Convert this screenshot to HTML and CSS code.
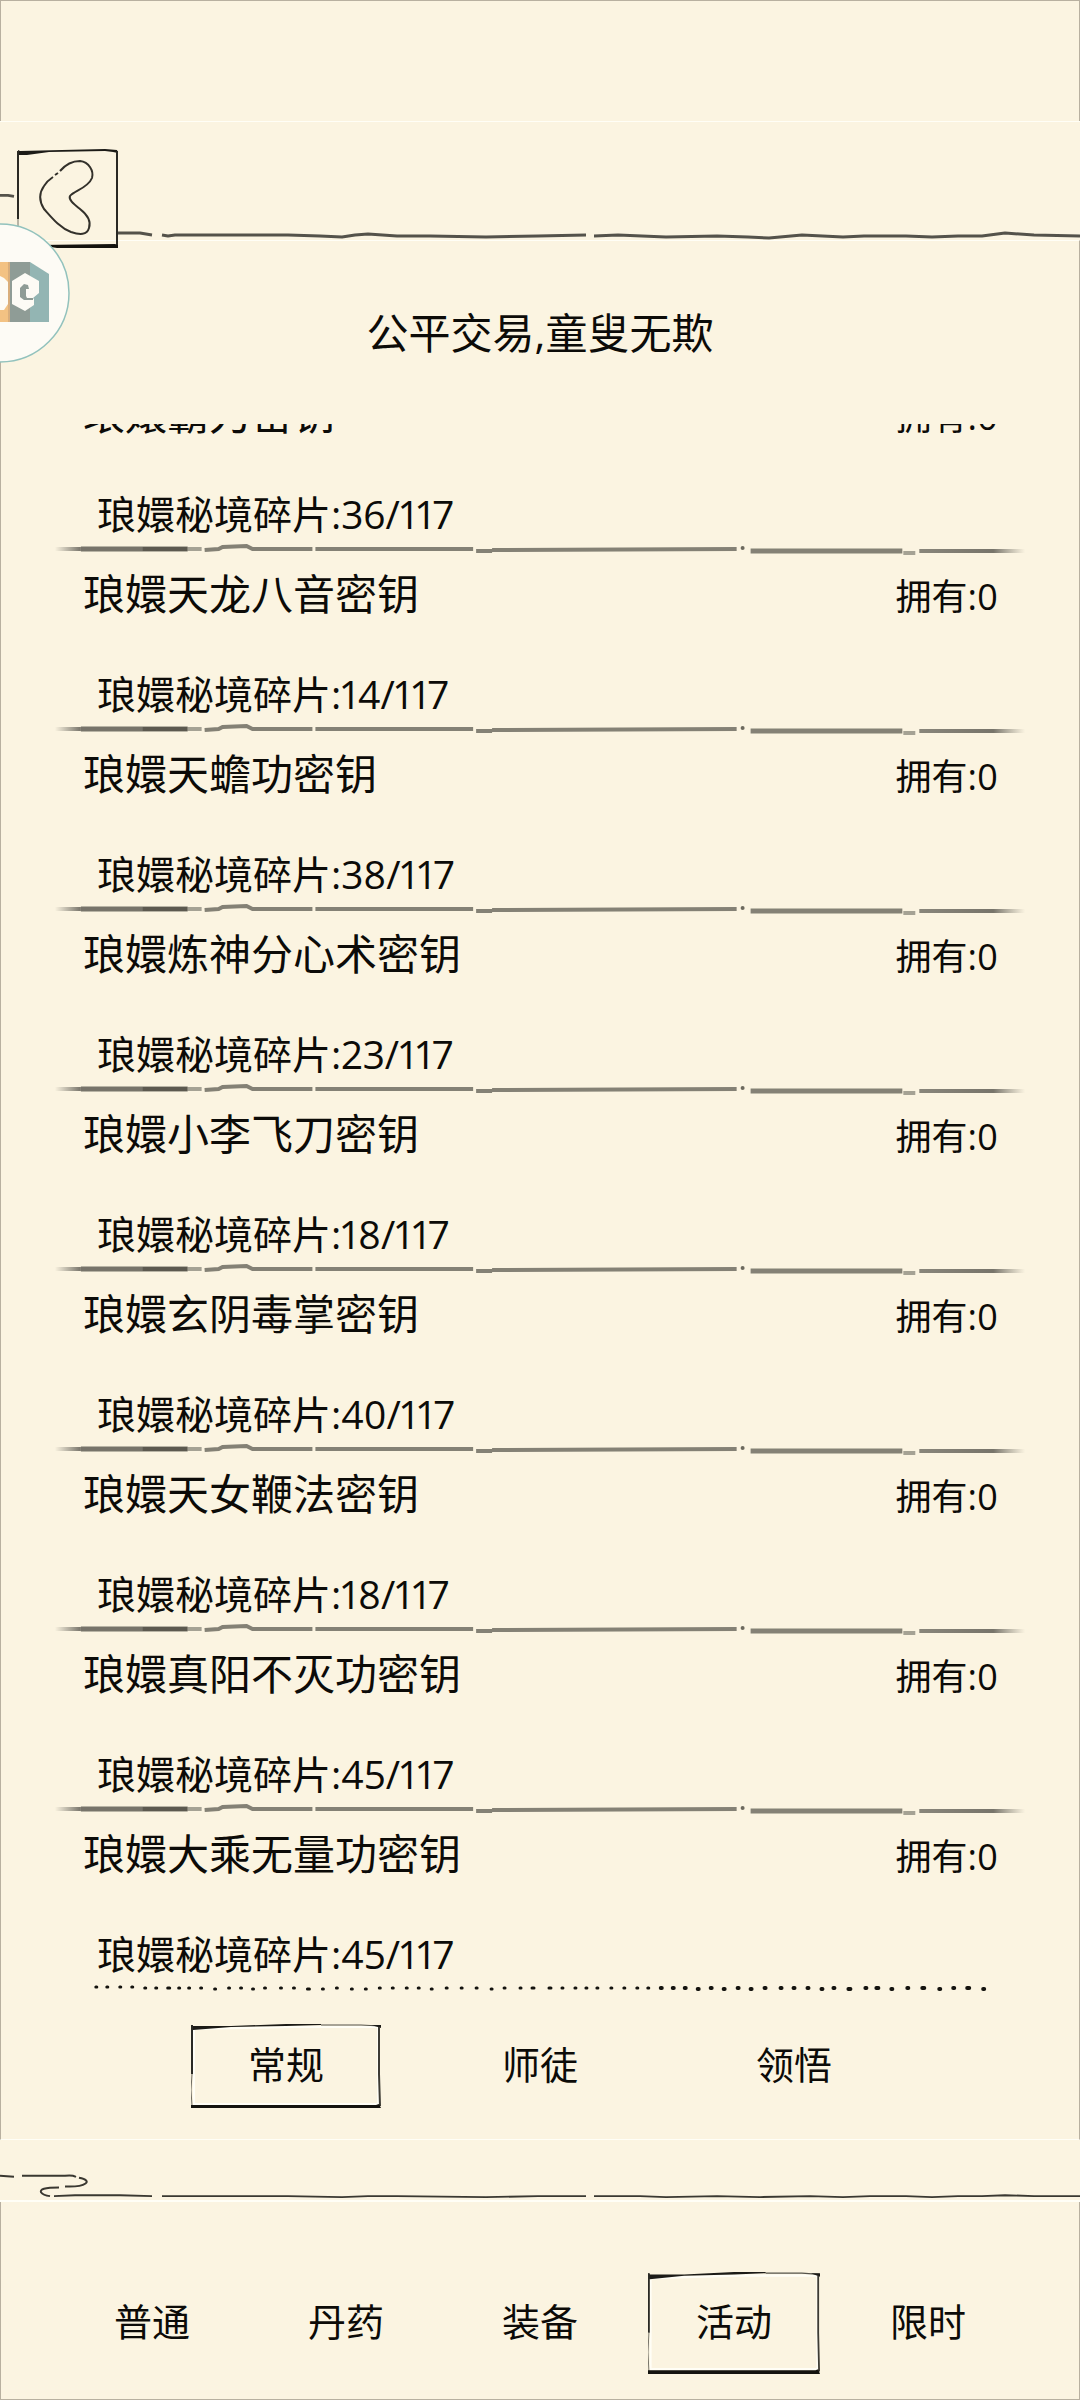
FILE: index.html
```
<!DOCTYPE html>
<html lang="zh-CN">
<head>
    <meta charset="UTF-8">
    <meta name="viewport" content="width=device-width, initial-scale=1.0">
    <title>公平交易</title>
    <link rel="stylesheet" href="styles.css">
</head>
<body>
    <!-- Shared ink strokes -->
    <svg class="defs" aria-hidden="true">
        <defs>
            <linearGradient id="fadeIn">
                <stop offset="0" stop-color="#77746a" stop-opacity="0"/>
                <stop offset="1" stop-color="#77746a"/>
            </linearGradient>
            <linearGradient id="fadeOut">
                <stop offset="0" stop-color="#88857a"/>
                <stop offset="0.7" stop-color="#77746a"/>
                <stop offset="1" stop-color="#88857a" stop-opacity="0"/>
            </linearGradient>
            <symbol id="frame" viewBox="0 0 190 84" preserveAspectRatio="none">
                <path d="M3 5L100 3L187 3V80H3Z" fill="none" stroke="#fffef6" stroke-width="2"/>
                <path d="M0 1L2 2L40 2L95 0L130 0L130 1L95 2L40 3L2 6L0 5Z" fill="#1c1b17"/>
                <path d="M130 1L170 1L189 2" fill="none" stroke="#55534a" stroke-width="1"/>
                <path d="M180 1L190 1L190 4L187 3Z" fill="#1c1b17"/>
                <path d="M1 1V50" fill="none" stroke="#2a2924" stroke-width="2"/>
                <path d="M1 50L0 66L1 82" fill="none" stroke="#6e6b60" stroke-width="1"/>
                <path d="M188 3L188 50L189 82" fill="none" stroke="#3d3b34" stroke-width="2"/>
                <path d="M0 81H185L188 80L190 84H0Z" fill="#14130f"/>
            </symbol>
            <symbol id="rule" viewBox="0 0 1080 18" preserveAspectRatio="none">
                <rect x="54" y="7" width="26" height="4" fill="url(#fadeIn)"/>
                <path d="M80 9H187" stroke="#77746a" stroke-width="5"/>
                <path d="M142 9H187" stroke="#5c594f" stroke-width="4"/>
                <path d="M187 9H201" stroke="#a5a294" stroke-width="4"/>
                <path d="M204 10L218 9L222 7L246 6L252 9L312 9M315 9L473 9M476 11H492M492 10L737 9" fill="none" stroke="#848175" stroke-width="4"/>
                <circle cx="743" cy="8" r="2" fill="#6c695e"/>
                <path d="M751 11H903" stroke="#848175" stroke-width="5"/>
                <path d="M904 13H916" stroke="#a5a294" stroke-width="4"/>
                <rect x="920" y="9" width="106" height="4" fill="url(#fadeOut)"/>
            </symbol>
        </defs>
    </svg>

    <div class="status-area"></div>

    <header class="top-bar">
        <svg class="band-line" viewBox="0 0 1080 119" preserveAspectRatio="none" aria-hidden="true">
            <g fill="none" stroke="#54524a" stroke-width="3" stroke-linejoin="round">
                <path d="M0 74L8 74L14 75"/>
                <path d="M117 112L140 112L152 114M162 114L168 115L175 114L288 114L320 115L342 116L355 114L368 113L397 115L430 115L486 116L538 115L586 114M594 115L618 114L666 116L717 115L748 116L769 117L802 114L843 116L864 115L906 115L932 116L958 115L982 115L1005 112L1034 114L1080 115"/>
            </g>
        </svg>
        <button class="back" aria-label="返回">
            <svg viewBox="0 0 102 100" aria-hidden="true">
                <path d="M1 1L3 2L45 1L88 0L100 1L101 4L96 3L88 2L32 3L10 6L1 6Z" fill="#1c1b17"/>
                <path d="M1 2V70" stroke="#2a2924" stroke-width="2"/>
                <path d="M1 70V97H35" fill="none" stroke="#77746a" stroke-width="1"/>
                <path d="M100 2V98" stroke="#2a2924" stroke-width="2"/>
                <path d="M22 96L98 95L101 96V99H40Z" fill="#14130f"/>
                <path d="M43 22C49 15 56 12 63 12C72 13 77 22 75 29C71 39 57 42 53 47C51 51 58 56 63 60C72 67 74 73 72 79C70 86 63 86 54 83C43 79 35 69 27 60C22 52 22 44 27 37C30 32 33 30 36 28M38 26L41 24" fill="none" stroke="#33312b" stroke-width="2"/>
            </svg>
        </button>
    </header>

    <main class="shop">
        <h1 class="title">公平交易,童叟无欺</h1>

        <ul class="list">
            <li class="item">
                <svg class="rule"><use href="#rule"/></svg>
                <div class="head"><span class="name">琅嬛霸刀密钥</span><span class="owned">拥有:0</span></div>
                <div class="cost">琅嬛秘境碎片:36/117</div>
            </li>
            <li class="item">
                <svg class="rule"><use href="#rule"/></svg>
                <div class="head"><span class="name">琅嬛天龙八音密钥</span><span class="owned">拥有:0</span></div>
                <div class="cost">琅嬛秘境碎片:14/117</div>
            </li>
            <li class="item">
                <svg class="rule"><use href="#rule"/></svg>
                <div class="head"><span class="name">琅嬛天蟾功密钥</span><span class="owned">拥有:0</span></div>
                <div class="cost">琅嬛秘境碎片:38/117</div>
            </li>
            <li class="item">
                <svg class="rule"><use href="#rule"/></svg>
                <div class="head"><span class="name">琅嬛炼神分心术密钥</span><span class="owned">拥有:0</span></div>
                <div class="cost">琅嬛秘境碎片:23/117</div>
            </li>
            <li class="item">
                <svg class="rule"><use href="#rule"/></svg>
                <div class="head"><span class="name">琅嬛小李飞刀密钥</span><span class="owned">拥有:0</span></div>
                <div class="cost">琅嬛秘境碎片:18/117</div>
            </li>
            <li class="item">
                <svg class="rule"><use href="#rule"/></svg>
                <div class="head"><span class="name">琅嬛玄阴毒掌密钥</span><span class="owned">拥有:0</span></div>
                <div class="cost">琅嬛秘境碎片:40/117</div>
            </li>
            <li class="item">
                <svg class="rule"><use href="#rule"/></svg>
                <div class="head"><span class="name">琅嬛天女鞭法密钥</span><span class="owned">拥有:0</span></div>
                <div class="cost">琅嬛秘境碎片:18/117</div>
            </li>
            <li class="item">
                <svg class="rule"><use href="#rule"/></svg>
                <div class="head"><span class="name">琅嬛真阳不灭功密钥</span><span class="owned">拥有:0</span></div>
                <div class="cost">琅嬛秘境碎片:45/117</div>
            </li>
            <li class="item">
                <svg class="rule"><use href="#rule"/></svg>
                <div class="head"><span class="name">琅嬛大乘无量功密钥</span><span class="owned">拥有:0</span></div>
                <div class="cost">琅嬛秘境碎片:45/117</div>
            </li>
        </ul>

        <svg class="dots" viewBox="0 0 1080 20" preserveAspectRatio="none" aria-hidden="true">
            <g fill="none" stroke="#14130f" stroke-linecap="round">
                <path stroke-width="3" d="M95 7h1M106 7h1M119 7h1M131 7h1M144 8h1M155 8h1M167 8h2M178 8h1M188 8h1M200 8h1M214 9h1M228 8h1M240 8h1M252 9h1M264 8h1M280 8h1M293 8h1M307 9h2M322 9h1M336 8h1M351 9h1M365 9h1M379 8h1M392 8h1M406 8h1M418 8h1M431 9h1M446 8h1M461 8h1M476 8h1M491 9h1M504 8h1M520 8h1M532 8h2M549 8h2M562 8h1M575 8h1M586 8h1M597 8h1M611 8h1M624 8h1M637 8h1M648 8h1"/>
                <path stroke-width="4" d="M661 8h1M673 8h1M685 8h1M698 9h1M711 8h1M724 9h1M738 8h1M751 9h1M765 8h1M781 8h1M794 8h1M808 8h1M822 9h1M834 8h1M849 9h2M866 8h1M877 8h2M892 9h1M908 8h1M923 8h2M940 9h1M954 8h1M968 8h2M984 9h1"/>
            </g>
        </svg>

        <div class="tabs kinds">
            <button class="tab active"><svg class="frame"><use href="#frame"/></svg>常规</button>
            <button class="tab">师徒</button>
            <button class="tab">领悟</button>
        </div>
    </main>

    <div class="cloud-band">
        <svg class="band-line" viewBox="0 0 1080 62" preserveAspectRatio="none" aria-hidden="true">
            <g fill="none" stroke="#3a3831" stroke-width="2">
                <path d="M0 37L14 38M22 37L65 37Q72 36 76 38M79 39C94 42 86 49 65 48M59 49C44 49 40 51 41 54Q43 57 50 58"/>
                <path d="M54 58L75 57L120 57L152 58M162 58L288 58L342 59L368 58L397 58L486 59L538 58L586 58M594 58L640 58L666 59L717 58L760 59L810 58L843 59L870 58L906 58L932 59L958 58L982 58L1005 57L1034 58L1080 58"/>
            </g>
        </svg>
    </div>

    <nav class="tabs goods">
        <button class="tab">普通</button>
        <button class="tab">丹药</button>
        <button class="tab">装备</button>
        <button class="tab active"><svg class="frame"><use href="#frame"/></svg>活动</button>
        <button class="tab">限时</button>
    </nav>

    <!-- Floating helper, half hidden behind the left edge -->
    <button class="helper" aria-label="助手">
        <svg viewBox="0 0 72 140" aria-hidden="true">
            <circle cx="0" cy="70" r="69" fill="#fdfbf5" stroke="#92c2bd" stroke-width="1.5"/>
            <path d="M0 39H10V99H0Z" fill="#f3c283"/>
            <path d="M8 39H10V99H8Z" fill="#d9ae7c"/>
            <path d="M0 53L4 55L8 59V81L4 87H0Z" fill="#fdfbf5"/>
            <path d="M10 39H30V99H10Z" fill="#8f9c96"/>
            <path d="M30 39L49 51V99H30Z" fill="#93b5b3"/>
            <path d="M25 50L39 58V70L33 75L34 76V82L25 88L12 81V58Z" fill="#fdfbf5"/>
            <path d="M29 66L28 62L24 61L20 65V74L24 77H33V75H27L26 73V66Z" fill="#8f9c96"/>
        </svg>
    </button>
</body>
</html>
```
FILE: styles.css
```
* {
    box-sizing: border-box;
}
body {
    position: relative;
    display: flex;
    flex-direction: column;
    height: 100vh;
    margin: 0;
    overflow: hidden;
    background-color: #fbf4e1;
    color: #0c0b08;
    font-family: "Open Sans", "Noto Sans CJK SC", sans-serif;
    font-variant-numeric: proportional-nums;
}
button {
    padding: 0;
    border: none;
    background: none;
    color: inherit;
    font: inherit;
    cursor: pointer;
}
svg {
    display: block;
}
.defs {
    position: absolute;
    width: 0;
    height: 0;
}

/* Paper panels */
.status-area {
    flex: none;
    height: 121px;
    border: 1px solid #b8b0a0;
    border-bottom: none;
}
.top-bar {
    position: relative;
    flex: none;
    height: 119px;
    padding: 27px 17px 0;
    border-top: 1px solid #fffef6;
}
.band-line {
    position: absolute;
    top: 0;
    left: 0;
    width: 100%;
    height: 100%;
}
.back {
    position: relative;
    width: 102px;
    height: 100px;
}
.back svg {
    width: 100%;
    height: 100%;
}
.shop {
    display: flex;
    flex: 1;
    flex-direction: column;
    min-height: 0;
    border: 1px solid #b8b0a0;
    border-top-color: #fffef6;
    border-bottom-color: #fffef6;
}
.cloud-band {
    position: relative;
    flex: none;
    height: 62px;
    border-bottom: 2px solid #fffef6;
}

.title {
    margin: 62px 0 61px;
    font-size: 42px;
    font-weight: 400;
    line-height: 60px;
    text-align: center;
}

/* Goods list, scrolled to its end */
.list {
    display: flex;
    flex: 1;
    flex-direction: column;
    justify-content: flex-end;
    min-height: 0;
    margin: 0;
    padding: 0;
    overflow: hidden;
    list-style: none;
}
.item {
    flex: none;
}
.rule {
    width: 100%;
    height: 18px;
}
.head {
    display: flex;
    align-items: baseline;
    justify-content: space-between;
    padding: 0 81px 0 82px;
}
.name {
    font-size: 42px;
    line-height: 72px;
}
.owned {
    font-size: 36px;
    line-height: 48px;
}
.cost {
    padding: 38px 96px 0;
    font-size: 39px;
    line-height: 52px;
}
.dots {
    flex: none;
    width: 100%;
    height: 20px;
}

/* Tabs */
.tabs {
    display: flex;
    flex: none;
    justify-content: center;
    font-size: 38px;
}
.tab {
    position: relative;
    padding-bottom: 8px;
}
.frame {
    position: absolute;
    top: 0;
    left: 0;
    width: 100%;
    height: 100%;
}
.kinds {
    gap: 64px;
    padding: 24px 0 31px;
}
.kinds .tab {
    width: 190px;
    height: 84px;
}
.goods {
    gap: 22px;
    height: 198px;
    padding-top: 70px;
    border: 1px solid #b8b0a0;
    border-top: none;
}
.goods .tab {
    width: 172px;
    height: 102px;
}

.helper {
    position: absolute;
    top: 223px;
    left: 0;
    width: 72px;
    height: 140px;
}
```
